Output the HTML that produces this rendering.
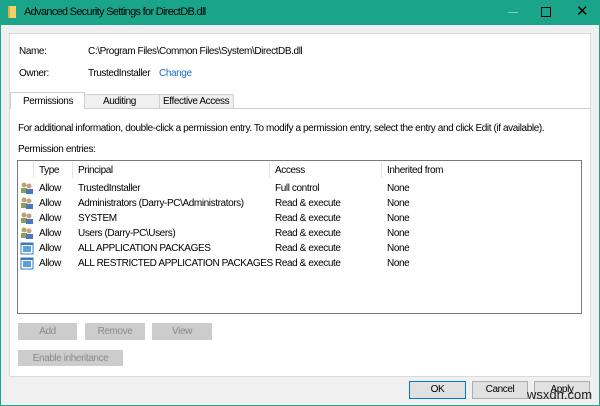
<!DOCTYPE html><html><head><style>
*{margin:0;padding:0;box-sizing:border-box}
body{width:600px;height:406px;overflow:hidden;font:10px "Liberation Sans",sans-serif;letter-spacing:-0.4px;color:#000;background:#f0f0f0;position:relative}
.a{position:absolute;white-space:nowrap}
.win{position:absolute;left:0;top:0;width:600px;height:406px;border:1px solid #1aa58a;}
.title{position:absolute;left:0;top:0;width:600px;height:25px;background:#1aa58a;}
.btn{position:absolute;background:#ccc;border:1px solid #ccc;color:#8a8a8a;text-align:center;line-height:15px}
.b2{position:absolute;background:#e1e1e1;border:1px solid #adadad;text-align:center;line-height:16px}
</style></head><body>
<div class="win"></div>
<div class="title"></div>
<div class="a" style="left:8px;top:6px;width:8px;height:12px;background:#f5d36a;border-left:2px solid #e0b040"></div>
<div class="a" style="left:24px;top:6px;font-size:11px;letter-spacing:-0.7px">Advanced Security Settings for DirectDB.dll</div>
<div class="a" style="left:508px;top:12px;width:10px;height:1px;background:#7fcfbd"></div>
<div class="a" style="left:541px;top:7px;width:10px;height:10px;border:1px solid #000"></div>
<div class="a" style="left:576px;top:2px;font-size:15px">✕</div>
<div class="a" style="left:9px;top:33px;width:582px;height:344px;background:#fff;border:1px solid #d9d9d9"></div>
<div class="a" style="left:9px;top:108px;width:582px;height:1px;background:#d0d0d0"></div>
<div class="a" style="left:19px;top:46px">Name:</div>
<div class="a" style="left:88px;top:46px">C:\Program Files\Common Files\System\DirectDB.dll</div>
<div class="a" style="left:19px;top:68px">Owner:</div>
<div class="a" style="left:88px;top:68px">TrustedInstaller</div>
<div class="a" style="left:159px;top:68px;color:#1a6fc4">Change</div>
<div class="a" style="left:84px;top:94px;width:150px;height:15px;background:#f0f0f0;border:1px solid #d0d0d0"></div>
<div class="a" style="left:159px;top:94px;width:1px;height:15px;background:#d0d0d0"></div>
<div class="a" style="left:10px;top:92px;width:75px;height:17px;background:#fff;border:1px solid #d0d0d0;border-bottom:none"></div>
<div class="a" style="left:23px;top:96px">Permissions</div>
<div class="a" style="left:103px;top:96px">Auditing</div>
<div class="a" style="left:163px;top:96px">Effective Access</div>
<div class="a" style="left:18px;top:123px">For additional information, double-click a permission entry. To modify a permission entry, select the entry and click Edit (if available).</div>
<div class="a" style="left:18px;top:144px">Permission entries:</div>
<div class="a" style="left:17px;top:160px;width:565px;height:154px;border:1px solid #7a7a7a;background:#fff"></div>
<div class="a" style="left:33px;top:162px;width:1px;height:16px;background:#e5e5e5"></div>
<div class="a" style="left:72px;top:162px;width:1px;height:16px;background:#e5e5e5"></div>
<div class="a" style="left:269px;top:162px;width:1px;height:16px;background:#e5e5e5"></div>
<div class="a" style="left:381px;top:162px;width:1px;height:16px;background:#e5e5e5"></div>
<div class="a" style="left:39px;top:165px">Type</div><div class="a" style="left:78px;top:165px">Principal</div><div class="a" style="left:275px;top:165px">Access</div><div class="a" style="left:387px;top:165px">Inherited from</div>
<div class="a" style="top:181px;left:0;line-height:15px">
<div style="position:relative">
<div class="a" style="left:39px">Allow<br>Allow<br>Allow<br>Allow<br>Allow<br>Allow</div>
<div class="a" style="left:78px">TrustedInstaller<br>Administrators (Darry-PC\Administrators)<br>SYSTEM<br>Users (Darry-PC\Users)<br>ALL APPLICATION PACKAGES<br>ALL RESTRICTED APPLICATION PACKAGES</div>
<div class="a" style="left:275px">Full control<br>Read &amp; execute<br>Read &amp; execute<br>Read &amp; execute<br>Read &amp; execute<br>Read &amp; execute</div>
<div class="a" style="left:387px">None<br>None<br>None<br>None<br>None<br>None</div>
</div></div>
<svg class="a" style="left:20px;top:181px" width="14" height="90">
<g id="u"><circle cx="4" cy="4" r="2.5" fill="#b9a56a"/><rect x="1" y="7" width="6" height="5" fill="#8aa060"/><circle cx="9" cy="5" r="2.5" fill="#c9a080"/><rect x="6" y="8" width="7" height="5" fill="#4a78b8"/></g>
<use href="#u" y="15"/><use href="#u" y="30"/><use href="#u" y="45"/>
<g id="p" transform="translate(0,60)"><rect x="1" y="2" width="12" height="11" fill="#fff" stroke="#3a78c0"/><rect x="3" y="5" width="8" height="6" fill="#5aa0e0"/><rect x="1" y="2" width="12" height="2" fill="#3a78c0"/></g>
<use href="#p" y="15"/>
</svg>
<div class="btn" style="left:18px;top:323px;width:59px;height:17px">Add</div>
<div class="btn" style="left:85px;top:323px;width:60px;height:17px">Remove</div>
<div class="btn" style="left:152px;top:323px;width:60px;height:17px">View</div>
<div class="btn" style="left:18px;top:350px;width:105px;height:16px">Enable inheritance</div>
<div class="b2" style="left:409px;top:381px;width:57px;height:18px;border:1px solid #0078d7">OK</div>
<div class="b2" style="left:472px;top:381px;width:56px;height:18px">Cancel</div>
<div class="b2" style="left:534px;top:381px;width:56px;height:18px">Apply</div>
<div class="a" style="left:527px;top:387px;font-size:13px;letter-spacing:0;color:#222">wsxdn.com</div>
</body></html>
